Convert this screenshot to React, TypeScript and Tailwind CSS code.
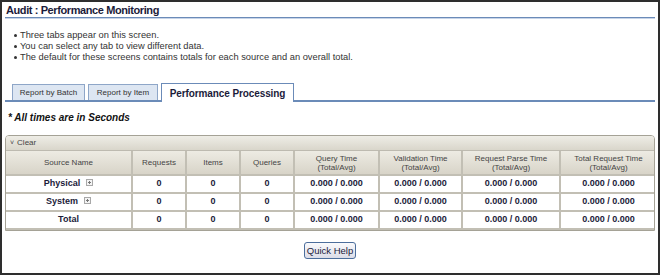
import React from 'react';

const cols = [
  { label: 'Source Name', w: 'w-[126px]' },
  { label: 'Requests', w: 'w-[54px]' },
  { label: 'Items', w: 'w-[54px]' },
  { label: 'Queries', w: 'w-[54px]' },
  { label: 'Query Time', sub: '(Total/Avg)', w: 'w-[85px]' },
  { label: 'Validation Time', sub: '(Total/Avg)', w: 'w-[83px]' },
  { label: 'Request Parse Time', sub: '(Total/Avg)', w: 'w-[98px]' },
  { label: 'Total Request Time', sub: '(Total/Avg)', w: 'w-[96px]' },
];

const rows = [
  { name: 'Physical', expand: true },
  { name: 'System', expand: true },
  { name: 'Total', expand: false },
];

const ExpandIcon = () => (
  <svg width="7" height="7" viewBox="0 0 7 7" className="inline-block ml-[6px] align-[0px]">
    <rect x="0.5" y="0.5" width="6" height="6" fill="#f4f4f4" stroke="#a8a8a8" />
    <path d="M2 3.5h3M3.5 2v3" stroke="#777" strokeWidth="1" />
  </svg>
);

export default function App() {
  return (
    <div className="w-[660px] h-[275px] border-2 border-[#2e2e2e] bg-white px-[3px] font-['Liberation_Sans',Arial,sans-serif] text-[#333] overflow-hidden">
      {/* Title */}
      <div className="h-[16px] pl-[1px] pt-[3px] border-b border-[#6b8bb8] shadow-[0_1px_0_#c7d4e8] text-[11px] leading-[11px] font-bold tracking-[-0.4px] text-[#1b1b3a]">
        Audit : Performance Monitoring
      </div>

      {/* Notes */}
      <ul className="mt-[12px] pl-[9px] text-[9.3px] leading-[11px] text-[#333]">
        {[
          'Three tabs appear on this screen.',
          'You can select any tab to view different data.',
          'The default for these screens contains totals for each source and an overall total.',
        ].map((t) => (
          <li key={t} className="flex items-center">
            <span className="w-[3px] h-[3px] rounded-full bg-[#333] mr-[3px]" />
            <span>{t}</span>
          </li>
        ))}
      </ul>

      {/* Tabs */}
      <div className="mt-[21px] flex items-end h-[18px] border-b-2 border-[#6b8bb8] pl-[7px]">
        <div className="h-[16px] mr-[3px] w-[73px] flex items-center justify-center bg-[#dde6f2] border border-b-0 border-[#8ea6c8] text-[8px] text-[#333]">
          Report by Batch
        </div>
        <div className="h-[16px] mr-[3px] w-[70px] flex items-center justify-center bg-[#dde6f2] border border-b-0 border-[#8ea6c8] text-[8px] text-[#333]">
          Report by Item
        </div>
        <div className="h-[19px] -mb-[2px] w-[133px] flex items-center justify-center bg-white border border-b-0 border-[#6b8bb8] text-[10px] font-bold tracking-[-0.1px] text-[#1b1b3a]">
          Performance Processing
        </div>
      </div>

      <div className="mt-[10px] pl-[3px] text-[10px] leading-[12px] font-bold italic text-[#111]">
        * All times are in Seconds
      </div>

      {/* Table */}
      <div className="mt-[11px] border border-[#a5a296] rounded-t-[4px] overflow-hidden">
        <div className="h-[15px] flex items-center pl-[4px] bg-gradient-to-b from-[#eeede6] to-[#d9d6cb] border-b border-[#bdbab0] text-[8px] text-[#444]">
          <span className="text-[7px] mr-[3px]">&#709;</span>Clear
        </div>
        <table className="w-full border-collapse table-fixed text-[9px]">
          <thead>
            <tr className="h-[24px] bg-gradient-to-b from-[#edebe3] to-[#d7d3c7]">
              {cols.map((c) => (
                <th
                  key={c.label}
                  className={`${c.w} font-normal text-[8px] text-[#444] leading-[9px] border-x-2 border-[#c2bfb4] first:border-l-0 last:border-r-0`}
                >
                  {c.label}
                  {c.sub && (
                    <>
                      <br />
                      {c.sub}
                    </>
                  )}
                </th>
              ))}
            </tr>
          </thead>
          <tbody>
            {rows.map((r) => (
              <tr key={r.name} className="h-[18px] text-[#1b1b3a] font-bold">
                <td className="text-center border-2 border-l-0 border-[#c2bfb4]">
                  {r.name}
                  {r.expand && <ExpandIcon />}
                </td>
                <td className="text-center border-2 border-[#c2bfb4]">0</td>
                <td className="text-center border-2 border-[#c2bfb4]">0</td>
                <td className="text-center border-2 border-[#c2bfb4]">0</td>
                <td className="text-center border-2 border-[#c2bfb4]">0.000 / 0.000</td>
                <td className="text-center border-2 border-[#c2bfb4]">0.000 / 0.000</td>
                <td className="text-center border-2 border-[#c2bfb4]">0.000 / 0.000</td>
                <td className="text-center border-2 border-r-0 border-[#c2bfb4]">0.000 / 0.000</td>
              </tr>
            ))}
          </tbody>
        </table>
      </div>

      <div className="mt-[11px] flex justify-center">
        <button className="h-[17px] w-[52px] rounded-[3px] border border-[#4c6e9c] bg-gradient-to-b from-[#fafafc] to-[#dcdde8] text-[9.5px] leading-[13px] text-[#1b1b3a]">
          Quick Help
        </button>
      </div>
    </div>
  );
}
